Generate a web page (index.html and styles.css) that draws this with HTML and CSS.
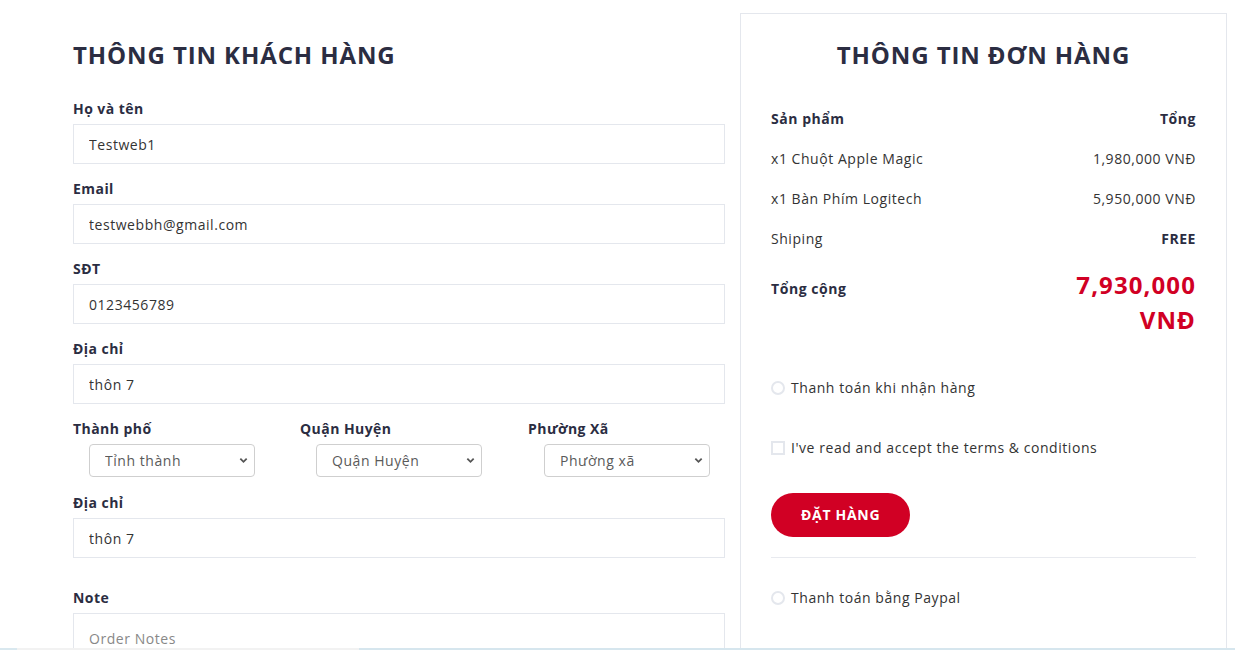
FILE: index.html
```html
<!DOCTYPE html>
<html lang="vi">
<head>
<meta charset="utf-8">
<title>Thanh toán</title>
<link rel="stylesheet" href="styles.css">
</head>
<body>
<div class="page">
  <section class="billing">
    <h3 class="title">THÔNG TIN KHÁCH HÀNG</h3>
    <div class="field">
      <label class="label">Họ và tên</label>
      <input class="input" type="text" value="Testweb1">
    </div>
    <div class="field">
      <label class="label">Email</label>
      <input class="input" type="email" value="testwebbh@gmail.com">
    </div>
    <div class="field">
      <label class="label">SĐT</label>
      <input class="input" type="text" value="0123456789">
    </div>
    <div class="field">
      <label class="label">Địa chỉ</label>
      <input class="input" type="text" value="thôn 7">
    </div>
    <div class="addr-row">
      <div class="addr-col">
        <label class="label">Thành phố</label>
        <div class="select-wrap">
          <select class="select"><option>Tỉnh thành</option></select>
          <svg class="chev" viewBox="0 0 10 7"><path d="M1.5 1.5 L5 5 L8.5 1.5" fill="none" stroke="#555" stroke-width="2"/></svg>
        </div>
      </div>
      <div class="addr-col">
        <label class="label">Quận Huyện</label>
        <div class="select-wrap">
          <select class="select"><option>Quận Huyện</option></select>
          <svg class="chev" viewBox="0 0 10 7"><path d="M1.5 1.5 L5 5 L8.5 1.5" fill="none" stroke="#555" stroke-width="2"/></svg>
        </div>
      </div>
      <div class="addr-col">
        <label class="label">Phường Xã</label>
        <div class="select-wrap">
          <select class="select"><option>Phường xã</option></select>
          <svg class="chev" viewBox="0 0 10 7"><path d="M1.5 1.5 L5 5 L8.5 1.5" fill="none" stroke="#555" stroke-width="2"/></svg>
        </div>
      </div>
    </div>
    <div class="field">
      <label class="label">Địa chỉ</label>
      <input class="input" type="text" value="thôn 7">
    </div>
    <div class="field note">
      <label class="label">Note</label>
      <textarea class="input textarea" placeholder="Order Notes"></textarea>
    </div>
  </section>

  <aside class="order">
    <h3 class="title">THÔNG TIN ĐƠN HÀNG</h3>
    <div class="order-col">
      <div class="cell strong">Sản phẩm</div>
      <div class="cell right strong">Tổng</div>
    </div>
    <div class="order-col">
      <div class="cell">x1 Chuột Apple Magic</div>
      <div class="cell right">1,980,000 VNĐ</div>
    </div>
    <div class="order-col">
      <div class="cell">x1 Bàn Phím Logitech</div>
      <div class="cell right">5,950,000 VNĐ</div>
    </div>
    <div class="order-col">
      <div class="cell">Shiping</div>
      <div class="cell right strong">FREE</div>
    </div>
    <div class="order-col total-row">
      <div class="cell strong">Tổng cộng</div>
      <div class="cell right order-total">7,930,000<br>VNĐ</div>
    </div>

    <div class="option payment">
      <span class="radio"></span>
      <span>Thanh toán khi nhận hàng</span>
    </div>
    <div class="option terms">
      <span class="checkbox"></span>
      <span>I've read and accept the terms &amp; conditions</span>
    </div>
    <button class="primary-btn" type="button">ĐẶT HÀNG</button>
    <div class="divider"></div>
    <div class="option paypal">
      <span class="radio"></span>
      <span>Thanh toán bằng Paypal</span>
    </div>
  </aside>
</div>
<div class="taskbar"></div>
</body>
</html>
```

FILE: styles.css
```css
html, body {
  margin: 0;
  padding: 0;
  overflow: hidden;
  background: #fff;
}

body {
  font-family: "Open Sans", "Liberation Sans", sans-serif;
  font-size: 14px;
  color: #333;
  letter-spacing: 0.55px;
}

.page {
  display: flex;
  align-items: flex-start;
  gap: 15px;
  padding-left: 73px;
}

.title {
  margin: 0;
  font-size: 24px;
  line-height: 26px;
  font-weight: 700;
  color: #2b2d42;
  letter-spacing: 0.9px;
  text-transform: uppercase;
}

/* ---------- billing ---------- */
.billing {
  width: 652px;
  padding-top: 42px;
}

.billing .title {
  margin-bottom: 31px;
}

.field {
  margin-bottom: 15px;
}

.label {
  display: block;
  font-size: 14px;
  line-height: 20px;
  font-weight: 700;
  color: #2b2d42;
  letter-spacing: 0.45px;
  margin-bottom: 5px;
}

.input {
  display: block;
  box-sizing: border-box;
  width: 100%;
  height: 40px;
  padding: 0 15px;
  border: 1px solid #e4e7ed;
  background: #fff;
  font: inherit;
  letter-spacing: inherit;
  color: #333;
  outline: none;
}

.addr-row {
  display: grid;
  grid-template-columns: 227px 228px 197px;
  margin-bottom: 16px;
}

.select-wrap {
  position: relative;
  width: 166px;
  margin-left: 16px;
}

.select {
  display: block;
  box-sizing: border-box;
  width: 100%;
  height: 33px;
  padding: 0 15px;
  border: 1px solid #cfcfcf;
  border-radius: 4px;
  background: #fff;
  font: inherit;
  letter-spacing: inherit;
  color: #5a5a5a;
  appearance: none;
  -webkit-appearance: none;
  outline: none;
}

.chev {
  position: absolute;
  right: 7px;
  top: 13px;
  width: 9px;
  height: 7px;
  pointer-events: none;
}

.note {
  margin-top: 30px;
}

.textarea {
  height: 100px;
  padding: 15px 15px;
  line-height: 20px;
  resize: none;
}

.textarea::placeholder {
  color: #888;
}

/* ---------- order ---------- */
.order {
  width: 487px;
  box-sizing: border-box;
  margin-top: 13px;
  padding: 28px 30px 30px;
  border: 1px solid #e4e7ed;
  min-height: 700px;
}

.order .title {
  text-align: center;
  margin-bottom: 31px;
}

.order-col {
  display: flex;
  align-items: baseline;
  justify-content: space-between;
  padding: 10px 0;
  line-height: 20px;
}

.order-col.total-row {
  padding: 8px 0 11px;
}

.cell.right {
  width: 150px;
  text-align: right;
}

.strong {
  font-weight: 700;
  color: #2b2d42;
}

.order-total {
  font-size: 24px;
  line-height: 35px;
  font-weight: 700;
  letter-spacing: 1.1px;
  color: #d10024;
}

.option {
  display: flex;
  align-items: center;
  gap: 6px;
  line-height: 20px;
  color: #333;
}

.radio,
.checkbox {
  width: 14px;
  height: 14px;
  box-sizing: border-box;
  border: 2px solid #e4e7ed;
  background: #fff;
  flex: none;
}

.radio {
  border-radius: 50%;
}

.payment {
  margin-top: 30px;
}

.terms {
  margin-top: 40px;
}

.primary-btn {
  display: inline-block;
  margin-top: 35px;
  padding: 12px 30px;
  border: none;
  border-radius: 40px;
  background: #d10024;
  color: #fff;
  font: inherit;
  font-weight: 700;
  line-height: 20px;
  letter-spacing: 0.7px;
  text-transform: uppercase;
}

.divider {
  margin-top: 20px;
  border-top: 1px solid #e8eaef;
}

.paypal {
  margin-top: 30px;
}

.taskbar {
  position: fixed;
  left: 0;
  right: 0;
  bottom: 0;
  height: 2px;
  background: linear-gradient(to right, #d9e8ef 0 17px, #f2f2f2 17px 359px, #d6e6ee 359px);
}
```
